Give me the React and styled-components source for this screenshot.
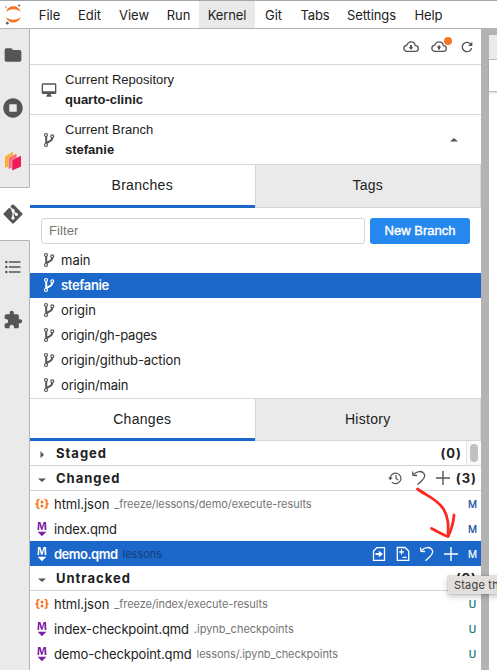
import React from "react";
import styled, { createGlobalStyle, css } from "styled-components";

const GlobalStyle = createGlobalStyle`
  * { box-sizing: border-box; }
  html, body { margin: 0; padding: 0; overflow: hidden; }
  body { font-family: Inter, "Liberation Sans", sans-serif; font-size: 13px; color: #212121; background: #fff; }
  svg { display: block; flex: none; }
`;

const Window = styled.div`
  position: relative;
  width: 497px;
  height: 670px;
  display: flex;
  flex-direction: column;
  overflow: hidden;
`;

const MenuBar = styled.nav`
  height: 29px;
  flex: none;
  display: flex;
  border-top: 1px solid #a7a7ab;
  border-bottom: 1px solid #b4b4b4;
`;

const LogoBox = styled.div`
  width: 30px;
  padding: 3px 0 0 4px;
`;

const MenuItem = styled.div`
  width: ${(p) => p.$w}px;
  display: flex;
  align-items: center;
  justify-content: center;
  padding-top: 1px;
  letter-spacing: ${(p) => p.$ls || 0}px;
  background: ${(p) => (p.$active ? "#e9e9e9" : "transparent")};
`;

const Body = styled.div`
  flex: 1;
  display: flex;
  min-height: 0;
`;

const SideBar = styled.aside`
  width: 30px;
  flex: none;
  display: flex;
  flex-direction: column;
`;

const SideTab = styled.div`
  height: ${(p) => p.$h || 53}px;
  flex: none;
  display: flex;
  align-items: center;
  justify-content: center;
  padding-right: 4px;
  background: ${(p) => (p.$active ? "#fff" : "#eaeaea")};
  border-right: 1px solid ${(p) => (p.$active ? "#fff" : "#b4b4b4")};
  ${(p) =>
    p.$active &&
    css`
      border-top: 1px solid #b4b4b4;
      border-bottom: 1px solid #b4b4b4;
    `}
`;

const SideFill = styled.div`
  flex: 1;
  background: #eaeaea;
  border-right: 1px solid #b4b4b4;
`;

const Panel = styled.main`
  width: 451px;
  flex: none;
  display: flex;
  flex-direction: column;
`;

const Toolbar = styled.div`
  height: 36px;
  display: flex;
  align-items: center;
  justify-content: flex-end;
  gap: 12px;
  padding: 1px 6px 0 0;
  border-bottom: 1px solid #d8d8d8;
`;

const Badged = styled.div`
  position: relative;
`;

const Dot = styled.span`
  position: absolute;
  width: 8px;
  height: 8px;
  right: -5px;
  top: -4px;
  border-radius: 50%;
  background: #f37726;
`;

const InfoRow = styled.div`
  height: 50px;
  display: flex;
  align-items: center;
  padding: 0 22px 0 11px;
  border-bottom: 1px solid #d8d8d8;
`;

const InfoIcon = styled.div`
  width: 16px;
  display: flex;
  justify-content: center;
`;

const InfoText = styled.div`
  flex: 1;
  margin-left: 8px;
  font: 13px/20px "Liberation Sans", sans-serif;
  b { display: block; }
`;

const Tabs = styled.div`
  display: flex;
  height: ${(p) => p.$h}px;
`;

const Tab = styled.div`
  flex: 1;
  display: flex;
  align-items: center;
  justify-content: center;
  font: 14px "Liberation Sans", sans-serif;
  letter-spacing: 0.28px;
  ${(p) =>
    p.$active
      ? css`
          border-bottom: 3px solid #1c67ca;
        `
      : css`
          background: #eaeaea;
          border: solid #d6d6d6;
          border-width: 0 1px 1px 1px;
          padding-bottom: 2px;
        `}
`;

const FilterRow = styled.div`
  display: flex;
  gap: 5px;
  height: 40px;
  padding: 10px 11px 4px;
`;

const FilterInput = styled.input`
  width: 324px;
  height: 26px;
  border: 1px solid #d4d4d4;
  border-radius: 3px;
  padding: 0 7px 2px;
  font: 13px "Liberation Sans", sans-serif;
  letter-spacing: 0.1px;
  outline: none;
  &::placeholder { color: #757575; opacity: 1; }
`;

const PrimaryButton = styled.button`
  width: 100px;
  height: 26px;
  border: 0;
  border-radius: 3px;
  padding: 0 0 2px;
  color: #fff;
  background: #2588ee;
  font: 13px "Liberation Sans", sans-serif;
  -webkit-text-stroke: 0.4px #fff;
`;

const BranchList = styled.div`
  height: 151px;
  border-bottom: 1px solid #d8d8d8;
`;

const BranchRow = styled.div`
  height: 25px;
  display: flex;
  align-items: center;
  gap: 6px;
  padding: 0 12px 1px 13px;
  letter-spacing: ${(p) => p.$ls || 0}px;
  font-weight: ${(p) => (p.$active ? 600 : 400)};
  color: ${(p) => (p.$active ? "#fff" : "#212121")};
  background: ${(p) => (p.$active ? "#1c67ca" : "transparent")};
  &:last-child { height: 24px; }
`;

const SectionRow = styled.div`
  height: 25px;
  display: flex;
  align-items: center;
  padding-left: 7px;
  border-bottom: 1px solid #d4d4d4;
  font-weight: 700;
`;

const SectionTitle = styled.span`
  flex: 1;
  margin-left: 9px;
  letter-spacing: 1px;
`;

const Count = styled.span`
  margin-right: 4px;
  letter-spacing: 1px;
`;

const SectionActions = styled.div`
  display: flex;
  align-items: center;
  gap: 10px;
  margin-right: 6px;
  color: #555;
`;

const ScrollTrack = styled.div`
  align-self: stretch;
  width: 15px;
  border-left: 1px solid #e4e4e4;
  background: #fafafa;
  display: flex;
  align-items: center;
  justify-content: center;
`;

const ScrollThumb = styled.div`
  width: 8px;
  height: 18px;
  border-radius: 4px;
  background: #c1c1c1;
`;

const FileRow = styled.div`
  height: 25px;
  display: flex;
  align-items: center;
  padding: 0 4px;
  color: ${(p) => (p.$active ? "#fff" : "#212121")};
  background: ${(p) => (p.$active ? "#1c67ca" : "transparent")};
`;

const FileName = styled.span`
  margin-left: 4px;
  letter-spacing: ${(p) => p.$ls || 0}px;
  font-weight: ${(p) => (p.$active ? 600 : 400)};
`;

const FilePath = styled.span`
  flex: 1;
  margin-left: 5px;
  padding-top: 1px;
  font-size: 11px;
  letter-spacing: ${(p) => p.$ls || 0}px;
  color: ${(p) => (p.$active ? "#153f78" : "#757575")};
`;

const FileActions = styled.div`
  display: flex;
  align-items: center;
  gap: 10px;
  margin-right: 10px;
`;

const Status = styled.span`
  width: 9px;
  font-size: 10px;
  text-align: center;
  color: ${(p) => p.$c};
  -webkit-text-stroke: 0.2px ${(p) => p.$c};
`;

const Divider = styled.div`
  width: 8px;
  flex: none;
  background: #b3b3b3;
`;

const DockArea = styled.section`
  flex: 1;
  border-top: 6px solid #b3b3b3;
`;

const DockTabs = styled.div`
  height: 25px;
  background: #eaeaea;
  border-bottom: 1px solid #b9b9b9;
`;

const DockToolbar = styled.div`
  height: 32px;
  border-bottom: 1px solid #bdbdbd;
  box-shadow: 0 1px 2px rgba(0, 0, 0, 0.15);
`;

const Annotation = styled.svg`
  position: absolute;
  left: 410px;
  top: 482px;
`;

const Tooltip = styled.div`
  position: absolute;
  left: 448px;
  top: 576px;
  width: 60px;
  height: 18px;
  padding-left: 6px;
  background: #e3dfdd;
  box-shadow: 0 0 1px rgba(0, 0, 0, 0.35), 0 2px 6px rgba(0, 0, 0, 0.25);
  color: #3b3b3b;
  font-size: 11px;
  line-height: 19px;
  letter-spacing: 0.2px;
  white-space: nowrap;
`;

const Glyph = ({ d, size, box = 24, color = "#555" }) => (
  <svg width={size} height={size} viewBox={`0 0 ${box} ${box}`} fill={color}>
    <path d={d} />
  </svg>
);

const paths = {
  folder: "M10 4H4c-1.1 0-1.99.9-1.99 2L2 18c0 1.1.9 2 2 2h16c1.1 0 2-.9 2-2V8c0-1.1-.9-2-2-2h-8l-2-2z",
  running: "M256 8C119 8 8 119 8 256s111 248 248 248 248-111 248-248S393 8 256 8zm96 328c0 8.800-7.200 16-16 16H176c-8.800 0-16-7.200-16-16V176c0-8.800 7.200-16 16-16h160c8.800 0 16 7.200 16 16v160z",
  toc: "M7,5H21V7H7V5M7,13V11H21V13H7M4,4.5A1.5,1.5 0 0,1 5.5,6A1.5,1.5 0 0,1 4,7.5A1.5,1.5 0 0,1 2.5,6A1.5,1.5 0 0,1 4,4.5M4,10.5A1.5,1.5 0 0,1 5.5,12A1.5,1.5 0 0,1 4,13.5A1.5,1.5 0 0,1 2.5,12A1.5,1.5 0 0,1 4,10.5M7,19V17H21V19H7M4,16.5A1.5,1.5 0 0,1 5.5,18A1.5,1.5 0 0,1 4,19.5A1.5,1.5 0 0,1 2.5,18A1.5,1.5 0 0,1 4,16.5Z",
  extension: "M20.5 11H19V7c0-1.1-.9-2-2-2h-4V3.5C13 2.12 11.88 1 10.5 1S8 2.12 8 3.5V5H4c-1.1 0-1.99.9-1.99 2v3.8H3.5c1.49 0 2.7 1.21 2.7 2.7s-1.21 2.7-2.7 2.7H2V20c0 1.1.9 2 2 2h3.8v-1.5c0-1.49 1.21-2.7 2.7-2.7 1.49 0 2.7 1.21 2.7 2.7V22H17c1.1 0 2-.9 2-2v-4h1.5c1.38 0 2.5-1.12 2.5-2.5S21.88 11 20.5 11z",
  desktop: "M21 2H3c-1.1 0-2 .9-2 2v12c0 1.1.9 2 2 2h7l-2 3v1h8v-1l-2-3h7c1.100 0 2-.9 2-2V4c0-1.1-.9-2-2-2zm0 12H3V4h18v10z",
  refresh: "M9 13.5c-2.49 0-4.5-2.01-4.5-4.5S6.51 4.5 9 4.5c1.24 0 2.36.52 3.17 1.33L10 8h5V3l-1.76 1.76C12.15 3.68 10.66 3 9 3 5.69 3 3.01 5.69 3.01 9S5.69 15 9 15c2.97 0 5.43-2.16 5.9-5h-1.52c-.46 2-2.24 3.5-4.38 3.5z",
  markdown: "M5 14.9h12l-6.1 6zm9.4-6.8c0-1.3-.1-2.9-.1-4.5-.4 1.4-.9 2.9-1.3 4.3l-1.3 4.3h-2L8.5 7.9c-.4-1.3-.7-2.9-1-4.3-.1 1.6-.1 3.2-.2 4.6L7 12.4H4.8l.7-11h3.3L10 5c.4 1.2.7 2.7 1 3.9.3-1.2.7-2.6 1-3.9l1.2-3.7h3.3l.6 11h-2.4l-.3-4.2z",
  json: "M20.2 11.8c-1.6 0-1.7.5-1.7 1 0 .4.1.9.1 1.3.1.5.1.9.1 1.3 0 1.7-1.4 2.3-3.5 2.3h-.9v-1.9h.5c1.1 0 1.4 0 1.4-.8 0-.3 0-.6-.1-1 0-.4-.1-.8-.1-1.2 0-1.3 0-1.8 1.3-2-1.3-.2-1.3-.7-1.3-2 0-.4.1-.8.1-1.2.1-.4.1-.7.1-1 0-.8-.4-.7-1.4-.8h-.5V4.1h.9c2.2 0 3.5.7 3.5 2.3 0 .4-.1.9-.1 1.3-.1.5-.1.9-.1 1.3 0 .5.2 1 1.7 1v1.8zM1.8 10.1c1.6 0 1.7-.5 1.7-1 0-.4-.1-.9-.1-1.3-.1-.5-.1-.9-.1-1.3 0-1.6 1.4-2.3 3.5-2.3h.9v1.9h-.5c-1 0-1.4 0-1.4.8 0 .3 0 .6.1 1 0 .2.1.6.1 1 0 1.3 0 1.8-1.3 2C6 11.2 6 11.7 6 13c0 .4-.1.8-.1 1.2-.1.3-.1.7-.1 1 0 .8.3.8 1.4.8h.5v1.9h-.9c-2.1 0-3.5-.6-3.5-2.3 0-.4.1-.9.1-1.3.1-.5.1-.9.1-1.3 0-.5-.2-1-1.7-1v-1.9z",
};

const Logo = () => (
  <svg width="20" height="22" viewBox="0 0 20 22">
    <path d="M2 8C4 .2 14.700.2 16.700 8 13 4.200 5.700 4.200 2 8Z" fill="#f37726" />
    <path d="M2 13C4 20.300 14.700 20.300 16.700 13 13 16.500 5.700 16.500 2 13Z" fill="#f37726" />
    <circle cx="15.200" cy="1.500" r="1.100" fill="#616161" />
    <circle cx="2" cy="3" r=".8" fill="#757575" />
    <circle cx="3.300" cy="19.200" r="1.400" fill="#616161" />
  </svg>
);

const Layers = () => (
  <svg width="18" height="20" viewBox="0 0 18 20">
    <path d="M1 5.500 9 .8V13L1 17Z" fill="#fbb033" />
    <path d="M4 7 12.300 2.700V14.500L4 18Z" fill="#eaeaea" />
    <path d="M4.500 7 12.500 2.700V14.500L4.500 18Z" fill="#fa6b6e" />
    <path d="M7.700 8.900 17 4.400V15.500L7.700 19.800Z" fill="#eaeaea" />
    <path d="M8.200 9 17 4.700V15.500L8.200 19.500Z" fill="#ef1a58" />
  </svg>
);

const GitLogo = () => (
  <svg width="20" height="20" viewBox="0 0 20 20">
    <rect x="2.900" y="2.900" width="14.200" height="14.200" rx="1.200" fill="#555" transform="rotate(45 10 10)" />
    <g stroke="#fff" strokeWidth="1.300" fill="#fff">
      <path d="M6.200 2.500 10 6.200V14M10 7l3.300 3.300" fill="none" />
      <circle cx="10" cy="6.500" r="1" />
      <circle cx="10" cy="14" r="1" />
      <circle cx="13.300" cy="10.300" r="1" />
    </g>
  </svg>
);

const BranchIcon = ({ color = "#555" }) => (
  <svg width="12" height="16" viewBox="0 0 12 16" fill="none" stroke={color}>
    <path d="M3.200 4.500v7M9.200 5.800c0 3.600-3 3.300-5.600 5.300" strokeWidth="2" />
    <circle cx="3" cy="3" r="1.500" strokeWidth="1.200" />
    <circle cx="3" cy="13" r="1.500" strokeWidth="1.200" />
    <circle cx="9.300" cy="4.300" r="1.500" strokeWidth="1.200" />
  </svg>
);

const CloudIcon = ({ up }) => (
  <svg width="16" height="12" viewBox="0 0 16 12" fill="none" stroke="#555" strokeWidth="1.300">
    <path d="M4 10.300a3 3 0 0 1-.3-6C4.500 2 6.200.9 8 .9c2.300 0 4 1.500 4.300 3.700 1.700 0 3 1.200 3 2.800 0 1.700-1.200 2.900-2.900 2.900Z" />
    {up ? (
      <path d="M8 4 10.500 6.500H9V8.500H7V6.500H5.500Z" fill="#555" stroke="none" />
    ) : (
      <path d="M8 8.800 5.500 6.300H7V4H9v2.300h1.500Z" fill="#555" stroke="none" />
    )}
  </svg>
);

const Caret = ({ dir }) => (
  <svg width="10" height="10" viewBox="0 0 10 10" fill="#555">
    <path d={{ up: "M1 6.500 5 3 9 6.500Z", down: "M1 5.500h8L5 9Z", right: "M3.500 3 7 7 3.500 10Z" }[dir]} />
  </svg>
);

const PlusIcon = () => (
  <svg width="14" height="14" viewBox="0 0 14 14" stroke="currentColor" strokeWidth="1.400">
    <path d="M7 0V14M0 7H14" />
  </svg>
);

const UndoIcon = () => (
  <svg width="14" height="16" viewBox="0 0 14 16" fill="none" stroke="currentColor" strokeWidth="1.300">
    <path d="M1.500 4.500C5 1 9.500.5 11.800 3.300c2 2.700.5 5-1.800 7.200L5.500 14.800" />
    <path d="M.5 1.500 1 5.300l4 .2" />
  </svg>
);

const HistoryIcon = () => (
  <svg width="14" height="14" viewBox="0 0 14 14" fill="none" stroke="currentColor" strokeWidth="1.200">
    <path d="M2.300 7.500a5.300 5.300 0 1 1 1.500 3.600M8 4v3.500l2.200 1.500" />
    <path d="M0 6.500h4.700L2.300 9.200Z" fill="currentColor" stroke="none" />
  </svg>
);

const OpenIcon = () => (
  <svg width="14" height="16" viewBox="0 0 14 16" fill="none" stroke="currentColor" strokeWidth="1.300">
    <path d="M4.800 1.700H12.500V14.300H1.500V5Z" />
    <path d="M3.500 7h3.300V4.700L11 8l-4.200 3.300V9H3.500Z" fill="currentColor" stroke="none" />
  </svg>
);

const DiffIcon = () => (
  <svg width="14" height="16" viewBox="0 0 14 16" fill="none" stroke="currentColor" strokeWidth="1.300">
    <path d="M1.300 1.500H9L12.700 5v9.400H1.300ZM5.500 3.500v5M3.200 6h4.600M6.500 11.400h4" />
  </svg>
);

const FileIcon = ({ kind, active }) =>
  kind === "json" ? (
    <svg width="16" height="16" viewBox="0 0 22 22" fill="#f37726">
      <path d={paths.json} />
      <circle cx="11" cy="13.800" r="2.100" />
      <circle cx="11" cy="8.200" r="2.100" />
    </svg>
  ) : (
    <Glyph d={paths.markdown} size={16} box={22} color={active ? "#fff" : "#7b1fa2"} />
  );

const menus = [
  ["File", 39, 0], ["Edit", 41, 0], ["View", 48, 0], ["Run", 41, 0], ["Kernel", 56, -0.1],
  ["Git", 37, 0], ["Tabs", 46, -0.1], ["Settings", 67, -0.1], ["Help", 47, -0.1],
];

const branches = [
  ["main", 0], ["stefanie", -0.33], ["origin", 0], ["origin/gh-pages", -0.2], ["origin/github-action", -0.1], ["origin/main", -0.15],
];

const changed = [
  { kind: "json", name: "html.json", path: "_freeze/lessons/demo/execute-results", status: "M", ls: -0.05, pls: -0.07 },
  { kind: "md", name: "index.qmd", status: "M", ls: -0.17 },
  { kind: "md", name: "demo.qmd", path: "lessons", status: "M", active: true, ls: -0.5 },
];

const untracked = [
  { kind: "json", name: "html.json", path: "_freeze/index/execute-results", status: "U", ls: -0.05, pls: -0.05 },
  { kind: "md", name: "index-checkpoint.qmd", path: ".ipynb_checkpoints", status: "U", ls: -0.16 },
  { kind: "md", name: "demo-checkpoint.qmd", path: "lessons/.ipynb_checkpoints", status: "U", ls: -0.12, pls: -0.07 },
];

const File = ({ kind, name, path, status, active, ls, pls }) => (
  <FileRow $active={active}>
    <FileIcon kind={kind} active={active} />
    <FileName $active={active} $ls={ls}>{name}</FileName>
    <FilePath $active={active} $ls={pls}>{path}</FilePath>
    {active && (
      <FileActions>
        <OpenIcon />
        <DiffIcon />
        <UndoIcon />
        <PlusIcon />
      </FileActions>
    )}
    <Status $c={active ? "#fff" : status === "M" ? "#0d47a1" : "#00696b"}>{status}</Status>
  </FileRow>
);

export default function App() {
  return (
    <Window>
      <GlobalStyle />
      <MenuBar>
        <LogoBox><Logo /></LogoBox>
        {menus.map(([label, w, ls]) => (
          <MenuItem key={label} $w={w} $ls={ls} $active={label === "Kernel"}>{label}</MenuItem>
        ))}
      </MenuBar>
      <Body>
        <SideBar>
          <SideTab $h={52}><Glyph d={paths.folder} size={20} /></SideTab>
          <SideTab><Glyph d={paths.running} size={20} box={512} /></SideTab>
          <SideTab><Layers /></SideTab>
          <SideTab $h={54} $active><GitLogo /></SideTab>
          <SideTab $h={52}><Glyph d={paths.toc} size={20} /></SideTab>
          <SideTab><Glyph d={paths.extension} size={20} /></SideTab>
          <SideFill />
        </SideBar>
        <Panel>
          <Toolbar>
            <CloudIcon />
            <Badged><CloudIcon up /><Dot /></Badged>
            <Glyph d={paths.refresh} size={16} box={18} />
          </Toolbar>
          <InfoRow>
            <InfoIcon><Glyph d={paths.desktop} size={16} /></InfoIcon>
            <InfoText>Current Repository<b>quarto-clinic</b></InfoText>
          </InfoRow>
          <InfoRow>
            <InfoIcon><BranchIcon /></InfoIcon>
            <InfoText>Current Branch<b>stefanie</b></InfoText>
            <Caret dir="up" />
          </InfoRow>
          <Tabs $h={43}>
            <Tab $active>Branches</Tab>
            <Tab>Tags</Tab>
          </Tabs>
          <FilterRow>
            <FilterInput placeholder="Filter" />
            <PrimaryButton>New Branch</PrimaryButton>
          </FilterRow>
          <BranchList>
            {branches.map(([name, ls]) => (
              <BranchRow key={name} $ls={ls} $active={name === "stefanie"}>
                <BranchIcon color={name === "stefanie" ? "#fff" : "#555"} />
                {name}
              </BranchRow>
            ))}
          </BranchList>
          <Tabs $h={42}>
            <Tab $active>Changes</Tab>
            <Tab>History</Tab>
          </Tabs>
          <SectionRow>
            <Caret dir="right" />
            <SectionTitle>Staged</SectionTitle>
            <Count>(0)</Count>
            <ScrollTrack><ScrollThumb /></ScrollTrack>
          </SectionRow>
          <SectionRow>
            <Caret dir="down" />
            <SectionTitle>Changed</SectionTitle>
            <SectionActions><HistoryIcon /><UndoIcon /><PlusIcon /></SectionActions>
            <Count>(3)</Count>
          </SectionRow>
          {changed.map((f) => <File key={f.name} {...f} />)}
          <SectionRow>
            <Caret dir="down" />
            <SectionTitle>Untracked</SectionTitle>
            <Count>(9)</Count>
          </SectionRow>
          {untracked.map((f) => <File key={f.name} {...f} />)}
        </Panel>
        <Divider />
        <DockArea>
          <DockTabs />
          <DockToolbar />
        </DockArea>
      </Body>
      <Annotation width="56" height="60" viewBox="0 0 56 60" fill="none" stroke="#fb2a20" strokeWidth="2.800" strokeLinecap="round" strokeLinejoin="round">
        <path d="M7.500 7C17 14 27 17 33.500 27c5 8 5 16 4.500 27" />
        <path d="M21.500 46.500C28 49.500 33 53 38 54.500c3-6 5.500-14 6-21.500" />
      </Annotation>
      <Tooltip>Stage this change</Tooltip>
    </Window>
  );
}
